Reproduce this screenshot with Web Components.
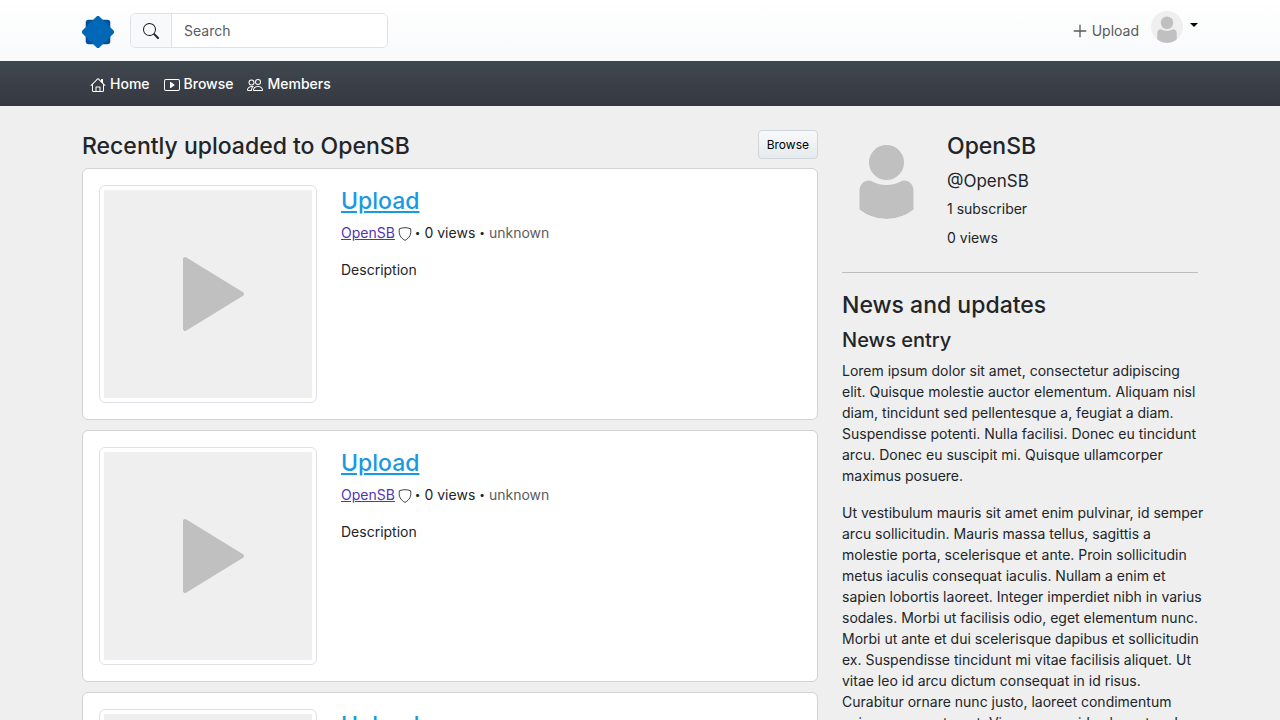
<!DOCTYPE html>
<html lang="en">
<head>
<meta charset="utf-8">
<meta name="viewport" content="width=device-width, initial-scale=1">
<title>OpenSB</title>
<style>
body { margin: 0; background: #efefef; color: #212529; font: 400 14px/21px Inter, "Liberation Sans", sans-serif; }
</style>
</head>
<body>
<sb-app></sb-app>
<script>
const define = (name, html) => {
  const template = document.createElement('template');
  template.innerHTML = '<style>*{box-sizing:border-box}</style>' + html;
  customElements.define(name, class extends HTMLElement {
    constructor() {
      super();
      this.attachShadow({ mode: 'open' }).append(template.content.cloneNode(true));
    }
  });
};

define('sb-avatar', `
<style>
:host { display: block; width: 32px; aspect-ratio: 1; border-radius: 50%; overflow: hidden; background: #efefef; }
svg { display: block; width: 100%; height: 100%; }
</style>
<svg viewBox="0 0 89 89" fill="#c0c0c0" role="img" aria-label="Profile picture">
  <circle cx="44.500" cy="32.500" r="17.500"/>
  <path d="M17.500 61C17.500 54.500 22 50.500 27 50.500C31 50.500 33 55 44.500 55C56 55 58 50.500 62 50.500C67 50.500 71.500 54.500 71.500 61V79.500Q60 89 44.500 89Q29 89 17.500 79.500Z"/>
</svg>`);

define('sb-header', `
<style>
:host { display: block; background: linear-gradient(#fff, #f8f9fb); }
.bar { max-width: 1140px; margin: 0 auto; padding: 0 12px; height: 61px; display: flex; align-items: center; }
.logo { display: block; margin-right: 16px; padding-top: 3px; }
.logo svg, .icon svg, .upload svg { display: block; }
form { display: flex; width: 258px; height: 35px; border: 1px solid #dee2e6; border-radius: 6px; overflow: hidden; background: #fff; }
.icon { width: 41px; border: 0; border-right: 1px solid #dee2e6; background: #f8f9fa; color: #212529; padding: 0 12px; }
input { flex: 1; min-width: 0; border: 0; outline: 0; padding: 0 12px; font: inherit; color: #212529; background: #fff; }
input::placeholder { color: #595c5f; opacity: 1; }
.upload { margin-left: auto; display: flex; align-items: center; gap: 4px; color: #595959; text-decoration: none; }
.user { display: flex; align-items: center; gap: 7px; border: 0; background: none; padding: 0 0 8px; margin-left: 12px; }
.caret { border: 4px solid transparent; border-top-color: #000; border-bottom: 0; margin-bottom: 4px; }
</style>
<header class="bar">
  <a class="logo" href="#" aria-label="OpenSB"><svg width="32" height="32" viewBox="0 0 32 32"><rect x="3.700" y="3.700" width="24.600" height="24.600" rx="3" fill="#00529b"/><rect x="4" y="4" width="24" height="24" rx="2" fill="#0068b6" transform="rotate(45 16 16)"/></svg></a>
  <form onsubmit="return false">
    <button class="icon" aria-label="Submit search"><svg width="16" height="16" viewBox="0 0 16 16" fill="currentColor"><path d="M11.742 10.344a6.500 6.500 0 1 0-1.397 1.398h-.001q.044.06.098.115l3.850 3.850a1 1 0 0 0 1.415-1.414l-3.850-3.850a1 1 0 0 0-.115-.1zM12 6.500a5.500 5.500 0 1 1-11 0 5.500 5.500 0 0 1 11 0"/></svg></button>
    <input type="text" placeholder="Search" aria-label="Search">
  </form>
  <a class="upload" href="#"><svg width="16" height="16" viewBox="0 0 16 16" fill="none" stroke="currentColor" stroke-width="1.300" stroke-linecap="round"><path d="M8 2.200V13.800M2.200 8H13.800"/></svg>Upload</a>
  <button class="user" aria-label="Account menu"><sb-avatar></sb-avatar><span class="caret"></span></button>
</header>`);

define('sb-nav', `
<style>
:host { display: block; background: linear-gradient(#3f484f, #363840); }
nav { max-width: 1140px; margin: 0 auto; padding: 0 20px; height: 45px; display: flex; align-items: center; gap: 14px; }
a { display: flex; align-items: center; gap: 4px; color: #fff; font-weight: 500; text-decoration: none; }
svg { width: 16px; height: 16px; margin-top: 3px; }
</style>
<nav aria-label="Main">
  <a href="#"><svg viewBox="0 0 16 16" fill="currentColor"><path d="M8.707 1.500a1 1 0 0 0-1.414 0L.646 8.146a.5.5 0 0 0 .708.708L2 8.207V13.500A1.500 1.500 0 0 0 3.500 15h9a1.500 1.500 0 0 0 1.500-1.500V8.207l.646.647a.5.5 0 0 0 .708-.708L13 5.793V2.500a.5.5 0 0 0-.5-.5h-1a.5.5 0 0 0-.5.5v1.293zM13 7.207V13.500a.5.5 0 0 1-.5.5H10.500v-4a.5.5 0 0 0-.5-.5H6a.5.5 0 0 0-.5.5v4h-2a.5.5 0 0 1-.5-.5V7.207l5-5zM6.500 14v-3.500h3V14z"/></svg>Home</a>
  <a href="#"><svg viewBox="0 0 16 16" fill="currentColor"><path d="M6.790 5.093A.5.5 0 0 0 6 5.500v5a.5.5 0 0 0 .79.407l3.500-2.500a.5.5 0 0 0 0-.814z"/><path d="M0 4a2 2 0 0 1 2-2h12a2 2 0 0 1 2 2v8a2 2 0 0 1-2 2H2a2 2 0 0 1-2-2zm15 0a1 1 0 0 0-1-1H2a1 1 0 0 0-1 1v8a1 1 0 0 0 1 1h12a1 1 0 0 0 1-1z"/></svg>Browse</a>
  <a href="#"><svg viewBox="0 0 16 16" fill="currentColor"><path d="M15 14s1 0 1-1-1-4-5-4-5 3-5 4 1 1 1 1zm-7.978-1L7 12.996c.001-.264.167-1.030.76-1.720C8.312 10.629 9.282 10 11 10c1.717 0 2.687.630 3.240 1.276.593.690.758 1.457.760 1.720l-.008.002-.014.002zM11 7a2 2 0 1 0 0-4 2 2 0 0 0 0 4m3-2a3 3 0 1 1-6 0 3 3 0 0 1 6 0M6.936 9.280a6 6 0 0 0-1.230-.247A7 7 0 0 0 5 9c-4 0-5 3-5 4q0 1 1 1h4.216A2.240 2.240 0 0 1 5 13c0-1.010.377-2.042 1.090-2.904.243-.294.526-.569.846-.816M4.920 10A5.500 5.500 0 0 0 4 13H1c0-.260.164-1.030.760-1.724.545-.636 1.492-1.256 3.160-1.275zM1.500 5.500a3 3 0 1 1 6 0 3 3 0 0 1-6 0m3-2a2 2 0 1 0 0 4 2 2 0 0 0 0-4"/></svg>Members</a>
</nav>`);

define('sb-upload', `
<style>
:host { display: grid; grid-template-columns: minmax(0, 218fr) minmax(0, 460fr); column-gap: 24px; align-items: start; background: #fff; border: 1px solid #d3d3d3; border-radius: 6px; padding: 16px; }
.thumb { display: block; aspect-ratio: 1; padding: 4px; border: 1px solid #dee2e6; border-radius: 6px; }
.thumb svg { display: block; width: 100%; height: 100%; background: #efefef; }
h2 { margin: 0 0 5px; font-size: 23px; line-height: 32px; font-weight: 500; }
h2 a { color: #199ae0; }
.meta { display: flex; align-items: center; gap: 4px; white-space: nowrap; }
.author { color: #5334b5; }
.author, .meta svg { margin-right: -1px; }
.dot { font-size: 10px; }
.shield { margin-top: 3px; }
.date { color: #595c5f; }
p { margin: 16px 0 0; }
</style>
<a class="thumb" href="#" aria-label="Watch Upload"><svg viewBox="0 0 208 208"><path d="M81 69L138 104L81 139Z" fill="#c0c0c0" stroke="#c0c0c0" stroke-width="4" stroke-linejoin="round"/></svg></a>
<div>
  <h2><a href="#"><slot name="title"></slot></a></h2>
  <div class="meta"><a class="author" href="#"><slot name="author"></slot></a><svg class="shield" width="14" height="14" viewBox="0 0 16 16" fill="none" stroke="#212529"><path d="M8 .800C6 .800 3.500 1.200 1.600 2C.4 8.500 3 12.600 8 15.300C13 12.600 15.600 8.500 14.400 2C12.500 1.200 10 .800 8 .800Z"/></svg><span class="dot">•</span><span><slot name="views"></slot></span><span class="dot">•</span><span class="date"><slot name="date"></slot></span></div>
  <p><slot></slot></p>
</div>`);

define('sb-profile', `
<style>
:host { display: flex; align-items: flex-start; gap: 16px; padding-bottom: 24px; border-bottom: 1px solid #bbbcbd; }
sb-avatar { width: 25%; flex: none; }
h2, h3, p { margin: 0 0 8px; font-weight: 400; }
h2 { font-size: 23px; line-height: 32px; font-weight: 500; }
h3 { font-size: 17px; line-height: 22px; margin-bottom: 6px; }
p:last-child { margin: 0; }
</style>
<sb-avatar></sb-avatar>
<div><h2>OpenSB</h2><h3>@OpenSB</h3><p>1 subscriber</p><p>0 views</p></div>`);

define('sb-news', `
<style>
:host { display: block; padding-top: 16px; margin-right: -8px; }
h2 { margin: 0 0 7px; font-size: 23px; line-height: 32px; font-weight: 500; }
h3 { margin: 0 0 8px; font-size: 20px; line-height: 24px; font-weight: 500; }
::slotted(p) { margin: 0 0 16px; }
</style>
<h2>News and updates</h2>
<h3>News entry</h3>
<slot></slot>`);

define('sb-app', `
<style>
:host { display: block; }
main { max-width: 1140px; margin: 0 auto; padding: 24px 12px; display: grid; grid-template-columns: minmax(0, 736fr) minmax(0, 356fr); column-gap: 24px; align-items: start; }
.heading { display: flex; justify-content: space-between; align-items: flex-start; height: 30px; margin-bottom: 8px; }
h1 { margin: 0; font-size: 23px; line-height: 32px; font-weight: 500; }
button { height: 29px; padding: 0 8px; font: 400 12px/18px Inter, sans-serif; color: #000; border: 1px solid #d0d7dd; border-radius: 4px; background: linear-gradient(#f8f9fa, #e6eaee); }
.list { display: grid; gap: 10px; }
</style>
<sb-header></sb-header>
<sb-nav></sb-nav>
<main>
  <section>
    <div class="heading"><h1>Recently uploaded to OpenSB</h1><button>Browse</button></div>
    <div class="list">
      <sb-upload><span slot="title">Upload</span><span slot="author">OpenSB</span><span slot="views">0 views</span><span slot="date">unknown</span>Description</sb-upload>
      <sb-upload><span slot="title">Upload</span><span slot="author">OpenSB</span><span slot="views">0 views</span><span slot="date">unknown</span>Description</sb-upload>
      <sb-upload><span slot="title">Upload</span><span slot="author">OpenSB</span><span slot="views">0 views</span><span slot="date">unknown</span>Description</sb-upload>
    </div>
  </section>
  <aside>
    <sb-profile></sb-profile>
    <sb-news>
      <p>Lorem ipsum dolor sit amet, consectetur adipiscing elit. Quisque molestie auctor elementum. Aliquam nisl diam, tincidunt sed pellentesque a, feugiat a diam. Suspendisse potenti. Nulla facilisi. Donec eu tincidunt arcu. Donec eu suscipit mi. Quisque ullamcorper maximus posuere.</p>
      <p>Ut vestibulum mauris sit amet enim pulvinar, id semper arcu sollicitudin. Mauris massa tellus, sagittis a molestie porta, scelerisque et ante. Proin sollicitudin metus iaculis consequat iaculis. Nullam a enim et sapien lobortis laoreet. Integer imperdiet nibh in varius sodales. Morbi ut facilisis odio, eget elementum nunc. Morbi ut ante et dui scelerisque dapibus et sollicitudin ex. Suspendisse tincidunt mi vitae facilisis aliquet. Ut vitae leo id arcu dictum consequat in id risus. Curabitur ornare nunc justo, laoreet condimentum enim consequat eget. Vivamus nec id vel amet sed.</p>
    </sb-news>
  </aside>
</main>`);
</script>
</body>
</html>
